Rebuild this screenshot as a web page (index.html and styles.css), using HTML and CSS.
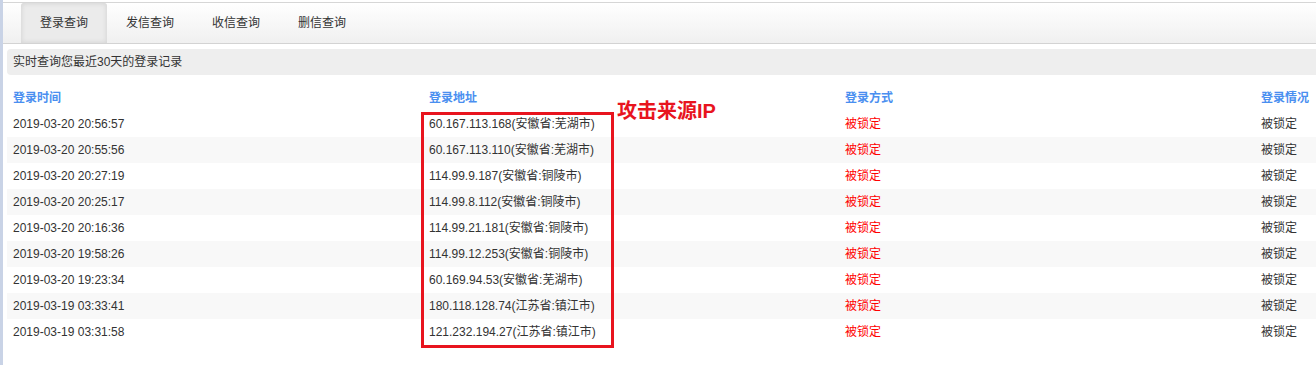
FILE: index.html
```html
<!DOCTYPE html>
<html lang="zh-CN">
<head>
<meta charset="utf-8">
<title>登录查询</title>
<link rel="stylesheet" href="styles.css">
</head>
<body>
<div class="page">
  <div class="nav">
    <div class="tab active">登录查询</div>
    <div class="tab">发信查询</div>
    <div class="tab">收信查询</div>
    <div class="tab">删信查询</div>
  </div>
  <div class="content">
    <div class="info">实时查询您最近30天的登录记录</div>
    <div class="table">
      <div class="row head"><div>登录时间</div><div>登录地址</div><div>登录方式</div><div>登录情况</div></div>
      <div class="row"><div>2019-03-20 20:56:57</div><div>60.167.113.168(安徽省:芜湖市)</div><div class="red">被锁定</div><div>被锁定</div></div>
      <div class="row"><div>2019-03-20 20:55:56</div><div>60.167.113.110(安徽省:芜湖市)</div><div class="red">被锁定</div><div>被锁定</div></div>
      <div class="row"><div>2019-03-20 20:27:19</div><div>114.99.9.187(安徽省:铜陵市)</div><div class="red">被锁定</div><div>被锁定</div></div>
      <div class="row"><div>2019-03-20 20:25:17</div><div>114.99.8.112(安徽省:铜陵市)</div><div class="red">被锁定</div><div>被锁定</div></div>
      <div class="row"><div>2019-03-20 20:16:36</div><div>114.99.21.181(安徽省:铜陵市)</div><div class="red">被锁定</div><div>被锁定</div></div>
      <div class="row"><div>2019-03-20 19:58:26</div><div>114.99.12.253(安徽省:铜陵市)</div><div class="red">被锁定</div><div>被锁定</div></div>
      <div class="row"><div>2019-03-20 19:23:34</div><div>60.169.94.53(安徽省:芜湖市)</div><div class="red">被锁定</div><div>被锁定</div></div>
      <div class="row"><div>2019-03-19 03:33:41</div><div>180.118.128.74(江苏省:镇江市)</div><div class="red">被锁定</div><div>被锁定</div></div>
      <div class="row"><div>2019-03-19 03:31:58</div><div>121.232.194.27(江苏省:镇江市)</div><div class="red">被锁定</div><div>被锁定</div></div>
      <div class="mark"></div>
      <div class="mark-label">攻击来源IP</div>
    </div>
  </div>
</div>
</body>
</html>
```

FILE: styles.css
```css
html, body {
  margin: 0;
  padding: 0;
  background: #fff;
}
body {
  font-family: "Liberation Sans", "Noto Sans CJK SC", sans-serif;
  font-size: 12px;
  color: #333;
}
.page {
  border-left: 3px solid #c9d3e6;
  min-height: 365px;
  box-sizing: border-box;
  padding-top: 2px;
}
.nav {
  display: flex;
  height: 40px;
  padding-left: 18px;
  border-top: 1px solid #d6d6d6;
  border-bottom: 1px solid #d3d3d3;
  background: linear-gradient(#ffffff, #f0f0f0);
}
.tab {
  width: 86px;
  line-height: 40px;
  text-align: center;
  font-size: 12px;
  color: #333;
}
.tab.active {
  background: #ebebeb;
  box-shadow: inset 0 0 4px 1px #d6d6d6;
  border-radius: 3px 3px 0 0;
}
.content {
  padding-left: 4px;
}
.info {
  margin-top: 5px;
  height: 26px;
  line-height: 26px;
  padding-left: 6px;
  background: #eeeeee;
  border-radius: 4px 0 0 4px;
}
.table {
  position: relative;
  margin-top: 10px;
}
.row {
  display: grid;
  grid-template-columns: 416px 416px 416px 1fr;
  height: 26px;
  line-height: 26px;
}
.row > div {
  padding-left: 6px;
  white-space: nowrap;
}
.row:nth-child(odd):not(.head) {
  background: #f8f8f8;
}
.row.head {
  color: #4a8ff0;
  font-weight: bold;
}
.red {
  color: #ff0000;
}
.mark {
  position: absolute;
  left: 414px;
  top: 27px;
  width: 187px;
  height: 230px;
  border: 3px solid #e8141e;
}
.mark-label {
  position: absolute;
  left: 610px;
  top: 14px;
  font-size: 20px;
  line-height: 24px;
  font-weight: bold;
  color: #e8141e;
}
```
